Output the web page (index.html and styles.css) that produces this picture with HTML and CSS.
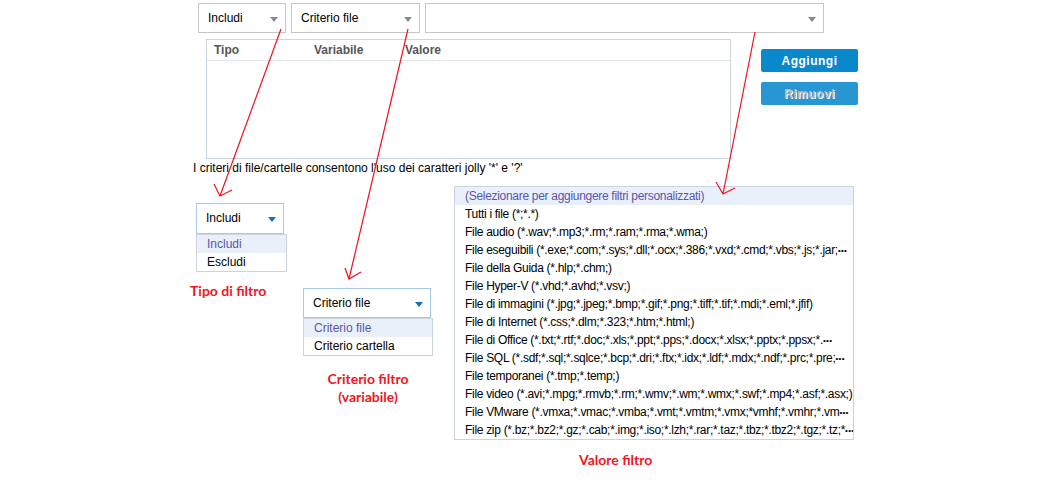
FILE: index.html
```html
<!DOCTYPE html>
<html lang="it">
<head>
    <meta charset="UTF-8">
    <title>Filtri file</title>
    <link rel="stylesheet" href="styles.css">
</head>
<body>
    <div class="page">
        <div class="top-row">
            <div class="select sel-type">Includi<span class="caret"></span></div>
            <div class="select sel-crit">Criterio file<span class="caret"></span></div>
            <div class="select sel-value"><span class="caret"></span></div>
        </div>

        <div class="main-row">
            <div class="grid">
                <div class="grid-head">
                    <span class="col-type">Tipo</span>
                    <span class="col-var">Variabile</span>
                    <span class="col-val">Valore</span>
                </div>
            </div>
            <div class="buttons">
                <button class="btn">Aggiungi</button>
                <button class="btn disabled">Rimuovi</button>
            </div>
        </div>

        <p class="hint">I criteri di file/cartelle consentono l'uso dei caratteri jolly '*' e '?'</p>

        <div class="samples">
            <div class="sample sample-type">
                <div class="select open">Includi<span class="caret blue"></span></div>
                <ul class="list">
                    <li class="active">Includi</li>
                    <li>Escludi</li>
                </ul>
                <p class="caption cap-type">Tipo di filtro</p>
            </div>
            <div class="sample sample-crit">
                <div class="select open">Criterio file<span class="caret blue"></span></div>
                <ul class="list">
                    <li class="active">Criterio file</li>
                    <li>Criterio cartella</li>
                </ul>
                <p class="caption cap-crit">Criterio filtro<br>(variabile)</p>
            </div>
            <div class="sample sample-value">
                <ul class="list big">
                    <li class="active">(Selezionare per aggiungere filtri personalizzati)</li>
                    <li>Tutti i file (*;*.*)</li>
                    <li>File audio (*.wav;*.mp3;*.rm;*.ram;*.rma;*.wma;)</li>
                    <li>File eseguibili (*.exe;*.com;*.sys;*.dll;*.ocx;*.386;*.vxd;*.cmd;*.vbs;*.js;*.jar;<span class="more">•••</span></li>
                    <li>File della Guida (*.hlp;*.chm;)</li>
                    <li>File Hyper-V (*.vhd;*.avhd;*.vsv;)</li>
                    <li>File di immagini (*.jpg;*.jpeg;*.bmp;*.gif;*.png;*.tiff;*.tif;*.mdi;*.eml;*.jfif)</li>
                    <li>File di Internet (*.css;*.dlm;*.323;*.htm;*.html;)</li>
                    <li>File di Office (*.txt;*.rtf;*.doc;*.xls;*.ppt;*.pps;*.docx;*.xlsx;*.pptx;*.ppsx;*.<span class="more">•••</span></li>
                    <li>File SQL (*.sdf;*.sql;*.sqlce;*.bcp;*.dri;*.ftx;*.idx;*.ldf;*.mdx;*.ndf;*.prc;*.pre;<span class="more">•••</span></li>
                    <li>File temporanei (*.tmp;*.temp;)</li>
                    <li>File video (*.avi;*.mpg;*.rmvb;*.rm;*.wmv;*.wm;*.wmx;*.swf;*.mp4;*.asf;*.asx;)</li>
                    <li>File VMware (*.vmxa;*.vmac;*.vmba;*.vmt;*.vmtm;*.vmx;*vmhf;*.vmhr;*.vm<span class="more">•••</span></li>
                    <li>File zip (*.bz;*.bz2;*.gz;*.cab;*.img;*.iso;*.lzh;*.rar;*.taz;*.tbz;*.tbz2;*.tgz;*.tz;*<span class="more">•••</span></li>
                </ul>
                <p class="caption cap-value">Valore filtro</p>
            </div>
        </div>

        <!-- callout arrows drawn over the page -->
        <svg class="arrows" width="1043" height="484" viewBox="0 0 1043 484">
            <g stroke="#f01020" stroke-width="1.2" fill="none">
                <path d="M281 29 L220 196 M214 184 L220 196 L232 190"/>
                <path d="M408 29 L349 279 M345 268 L349 279 L361 272"/>
                <path d="M755 32 L723 194 M716 182 L723 194 L735 188"/>
            </g>
        </svg>
    </div>
</body>
</html>
```

FILE: styles.css
```css
body {
    margin: 0;
    background-color: #ffffff;
    font-family: "Liberation Sans", Arial, sans-serif;
    font-size: 12px;
    color: #000000;
}

.page {
    position: relative;
    width: 1043px;
    height: 484px;
    overflow: hidden;
}

.top-row {
    display: flex;
    gap: 5px;
    padding: 3px 0 0 198px;
}

.select {
    position: relative;
    box-sizing: border-box;
    height: 30px;
    line-height: 28px;
    padding-left: 9px;
    border: 1px solid #c6c6c6;
    background-color: #ffffff;
    white-space: nowrap;
}

.caret {
    position: absolute;
    right: 7px;
    top: 13px;
    width: 0;
    height: 0;
    border-left: 4px solid transparent;
    border-right: 4px solid transparent;
    border-top: 5px solid #8a8a8a;
}

.caret.blue {
    border-top-color: #1a6cb8;
}

.sel-type {
    width: 88px;
}

.sel-crit {
    width: 129px;
}

.sel-value {
    width: 399px;
}

.main-row {
    display: flex;
    margin-top: 6px;
    padding-left: 206px;
}

.grid {
    box-sizing: border-box;
    width: 525px;
    height: 120px;
    border: 1px solid #cdd5de;
}

.grid-head {
    display: flex;
    height: 20px;
    line-height: 20px;
    border-bottom: 1px solid #e2e6ea;
    font-weight: bold;
    color: #555555;
}

.col-type {
    width: 100px;
    padding-left: 7px;
}

.col-var {
    width: 91px;
}

.buttons {
    display: flex;
    flex-direction: column;
    gap: 10px;
    margin: 10px 0 0 30px;
}

.btn {
    width: 97px;
    height: 23px;
    padding: 0;
    border: none;
    border-radius: 2px;
    background-color: #0a88cc;
    color: #ffffff;
    font-family: "Liberation Sans", Arial, sans-serif;
    font-size: 12px;
    font-weight: bold;
    letter-spacing: 0.5px;
}

.btn.disabled {
    background-color: #2896d2;
    color: #b4b4b4;
    text-shadow: 1px 1px 0 #ffffff;
}

.hint {
    margin: 0;
    height: 18px;
    line-height: 18px;
    padding-left: 193px;
}

.samples {
    display: flex;
    align-items: flex-start;
    margin-top: 9px;
    padding-left: 196px;
}

.list {
    margin: 0;
    padding: 0;
    list-style: none;
    border: 1px solid #cbd3dd;
    background-color: #ffffff;
}

.list li {
    height: 18px;
    line-height: 18px;
    padding-left: 10px;
    white-space: nowrap;
    overflow: hidden;
}

.list li.active {
    background-color: #e9f0f9;
    color: #5757ad;
}

.select.open {
    height: 31px;
    line-height: 29px;
    border-color: #a9c9ea;
}

.sample-type {
    width: 91px;
    margin-top: 17px;
}

.sample-type .select {
    width: 88px;
}

.sample-crit {
    width: 130px;
    margin: 102px 0 0 16px;
}

.sample-crit .select {
    width: 128px;
    height: 30px;
    line-height: 28px;
}

.sample-value {
    width: 400px;
    margin-left: 21px;
}

.big li {
    padding-left: 10px;
    letter-spacing: -0.3px;
}

.more {
    font-size: 8px;
    letter-spacing: 0.3px;
    vertical-align: 1px;
}

.caption {
    margin: 0;
    color: #f01622;
    font-family: Lato, "Liberation Sans", sans-serif;
    font-size: 14px;
    font-weight: bold;
    line-height: 18px;
}

.cap-type {
    margin: 10px 0 0 -6px;
}

.cap-crit {
    margin-top: 14px;
    text-align: center;
}

.cap-value {
    margin: 11px 0 0 125px;
}

.arrows {
    position: absolute;
    left: 0;
    top: 0;
    pointer-events: none;
}
```
